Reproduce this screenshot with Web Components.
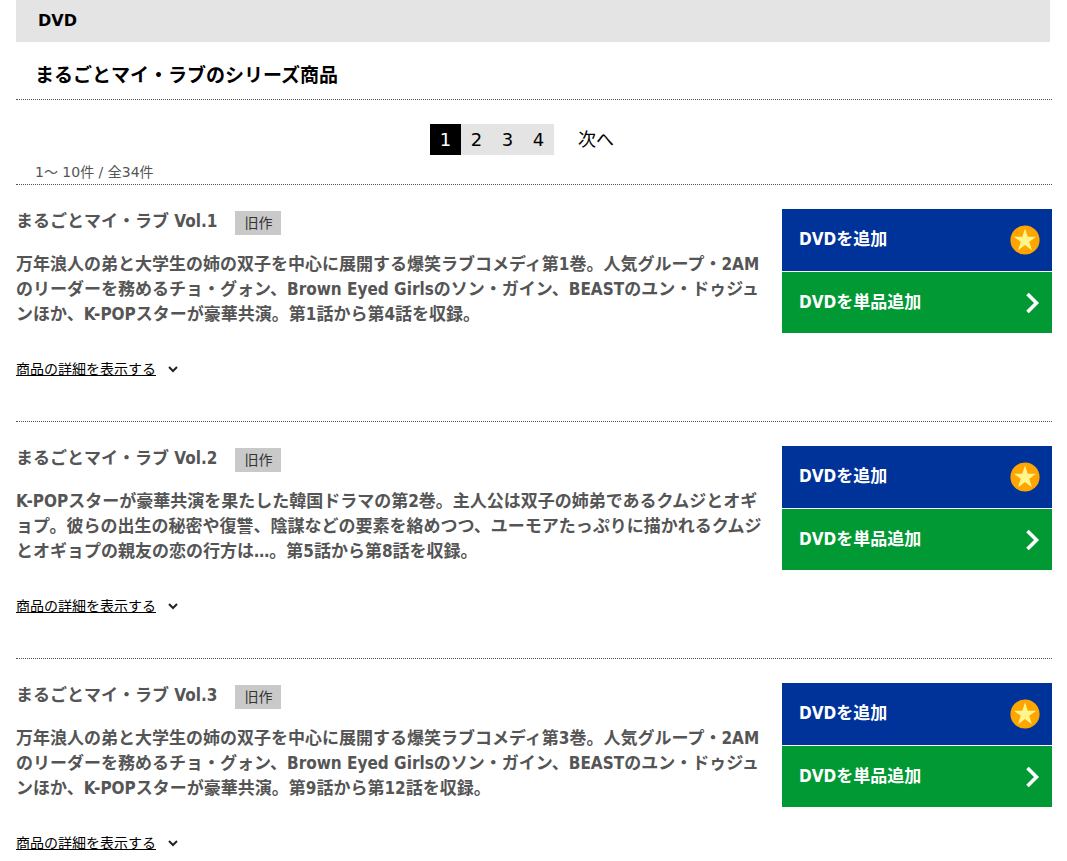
<!DOCTYPE html>
<html lang="ja">
<head>
<meta charset="utf-8">
<meta name="viewport" content="width=device-width, initial-scale=1">
<title>まるごとマイ・ラブのシリーズ商品</title>
<style>
  body { margin: 0 15px 0 16px; background: #fff; color: #000;
    font-family: "DejaVu Sans Condensed", "Noto Sans CJK JP", sans-serif; }
</style>
</head>
<body>
<series-page>
  <span slot="category">DVD</span>
  <span slot="title">まるごとマイ・ラブのシリーズ商品</span>
  <page-nav slot="pager" pages="4" current="1"></page-nav>
  <span slot="count">1〜 10件 / 全34件</span>
  <dvd-item>
    <span slot="name">まるごとマイ・ラブ Vol.1</span>
    <span slot="badge">旧作</span>
    万年浪人の弟と大学生の姉の双子を中心に展開する爆笑ラブコメディ第1巻。人気グループ・2AMのリーダーを務めるチョ・グォン、Brown Eyed Girlsのソン・ガイン、BEASTのユン・ドゥジュンほか、K-POPスターが豪華共演。第1話から第4話を収録。
  </dvd-item>
  <dvd-item>
    <span slot="name">まるごとマイ・ラブ Vol.2</span>
    <span slot="badge">旧作</span>
    K-POPスターが豪華共演を果たした韓国ドラマの第2巻。主人公は双子の姉弟であるクムジとオギョプ。彼らの出生の秘密や復讐、陰謀などの要素を絡めつつ、ユーモアたっぷりに描かれるクムジとオギョプの親友の恋の行方は…。第5話から第8話を収録。
  </dvd-item>
  <dvd-item>
    <span slot="name">まるごとマイ・ラブ Vol.3</span>
    <span slot="badge">旧作</span>
    万年浪人の弟と大学生の姉の双子を中心に展開する爆笑ラブコメディ第3巻。人気グループ・2AMのリーダーを務めるチョ・グォン、Brown Eyed Girlsのソン・ガイン、BEASTのユン・ドゥジュンほか、K-POPスターが豪華共演。第9話から第12話を収録。
  </dvd-item>
</series-page>

<template id="series-page">
  <style>
    :host { display: block; }
    h1, h2, p { margin: 0; }
    h1, p { font-family: "DejaVu Sans", "Noto Sans CJK JP", sans-serif; }
    h1 { margin-right: 2px; padding: 0 22px; background: #e4e4e4; font-size: 16px; line-height: 42px; }
    h2 { padding: 19px 19px 10px; font-size: 19px; line-height: 28px; border-bottom: 1px dotted #555; }
    p { padding: 7px 19px 2px; font-size: 14px; line-height: 20px; color: #555; border-bottom: 1px dotted #555; }
  </style>
  <h1><slot name="category"></slot></h1>
  <h2><slot name="title"></slot></h2>
  <slot name="pager"></slot>
  <p><slot name="count"></slot></p>
  <slot></slot>
</template>

<template id="page-nav">
  <style>
    :host { display: block; margin-top: 24px; }
    nav { display: flex; justify-content: center; font-family: "DejaVu Sans", "Noto Sans CJK JP", sans-serif;
      font-size: 18px; line-height: 31px; }
    a { color: #000; text-decoration: none; }
    .num { width: 31px; text-align: center; background: #e4e4e4; }
    .num[aria-current] { background: #000; color: #fff; }
    .next { padding: 0 24px; }
  </style>
  <nav aria-label="ページ"></nav>
</template>

<template id="dvd-item">
  <style>
    :host { display: flex; justify-content: space-between; gap: 8px; padding: 24px 0; min-height: 188px;
      border-bottom: 1px dotted #555; color: #555; }
    .text { flex: 1; min-width: 0; }
    header { display: flex; align-items: flex-start; gap: 18px; }
    h3, p { margin: 0; font-size: 17px; font-weight: bold; }
    h3 { line-height: 24px; }
    .badge { margin-top: 2px; padding: 0 9px; background: #c9c9c9; color: #333; font-size: 14px; line-height: 24px; }
    p { margin-top: 17px; line-height: 25px; }
    .more { display: inline-flex; align-items: center; gap: 12px; margin-top: 30px; color: #000;
      font-size: 14px; line-height: 24px; text-decoration: none; }
    .more span { text-decoration: underline; }
    .actions { display: flex; flex-direction: column; gap: 1px; width: 270px; }
  </style>
  <div class="text">
    <header><h3><slot name="name"></slot></h3><span class="badge"><slot name="badge"></slot></span></header>
    <p><slot></slot></p>
    <a class="more" href="#detail"><span>商品の詳細を表示する</span><svg width="10" height="8" viewBox="0 0 10 8" aria-hidden="true"><path d="M1 2l4 4 4-4" fill="none" stroke="#222" stroke-width="2"/></svg></a>
  </div>
  <div class="actions">
    <add-button kind="set">DVDを追加</add-button>
    <add-button kind="single">DVDを単品追加</add-button>
  </div>
</template>

<template id="add-button">
  <style>
    :host { display: block; }
    button { display: flex; align-items: center; justify-content: space-between; width: 100%; height: 62px;
      margin: 0; padding: 0 12px 2px 17px; border: 0; background: #039; color: #fff; cursor: pointer;
      font-family: inherit; font-size: 17px; font-weight: bold; line-height: 24px; text-align: left; }
    :host([kind="single"]) button { background: #093; height: 61px; }
    svg { display: none; margin-top: 2px; }
    :host([kind="set"]) .star, :host([kind="single"]) .arrow { display: block; }
  </style>
  <button type="button"><slot></slot>
    <svg class="star" width="30" height="30" viewBox="0 0 30 30" aria-hidden="true"><circle cx="15" cy="15" r="14.6" fill="#ffa500"/><path d="M15 3.5l2.700 8.200h8.500l-6.900 5.100 2.600 8.400-6.900-5.100-6.900 5.100 2.600-8.400-6.900-5.100h8.500z" fill="#fff58c"/></svg>
    <svg class="arrow" width="14" height="22" viewBox="0 0 14 22" aria-hidden="true"><path d="M1.500 2L10.500 11l-9 9" fill="none" stroke="#fff" stroke-width="3.600"/></svg>
  </button>
</template>

<script>
  class TemplateElement extends HTMLElement {
    constructor() {
      super();
      this.attachShadow({ mode: "open" })
        .append(document.getElementById(this.localName).content.cloneNode(true));
    }
  }
  customElements.define("series-page", class extends TemplateElement {});
  customElements.define("page-nav", class extends TemplateElement {
    connectedCallback() {
      const nav = this.shadowRoot.querySelector("nav");
      nav.replaceChildren();
      const add = (text, cls) => {
        const a = document.createElement("a");
        a.href = "#page";
        a.className = cls;
        a.textContent = text;
        nav.append(a);
        return a;
      };
      for (let i = 1; i <= Number(this.getAttribute("pages")); i++) {
        const a = add(String(i), "num");
        if (String(i) === this.getAttribute("current")) a.setAttribute("aria-current", "page");
      }
      add("次へ", "next");
    }
  });
  customElements.define("add-button", class extends TemplateElement {});
  customElements.define("dvd-item", class extends TemplateElement {});
</script>
</body>
</html>
